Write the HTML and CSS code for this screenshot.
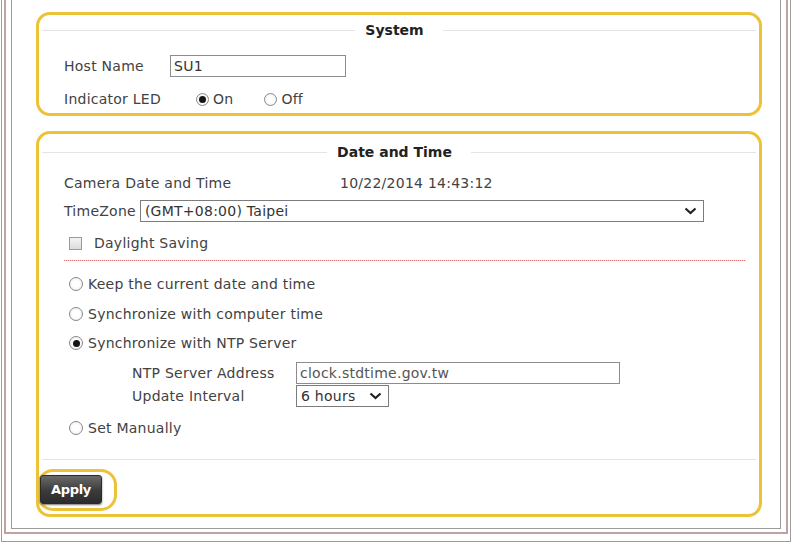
FILE: index.html
```html
<!DOCTYPE html>
<html lang="en">
	<head>
		<meta charset="utf-8">
		<title>System / Date and Time</title>
		<link rel="stylesheet" href="styles.css">
	</head>
	<body>
		<div class="frame">
			<div class="frame-mid">
				<div class="panel">
					<!-- 系统 -->
					<section class="box box-system">
						<div class="legend"><span>System</span></div>
						<div class="row row-host">
							<span class="lbl lbl-host">Host Name</span>
							<span class="field field-host">SU1</span>
						</div>
						<div class="row row-led">
							<span class="lbl lbl-led">Indicator LED</span>
							<span class="radio checked"></span><span class="opt opt-on">On</span>
							<span class="radio"></span><span class="opt">Off</span>
						</div>
					</section>
					<!-- 日期时间 -->
					<section class="box box-time">
						<div class="legend"><span>Date and Time</span></div>
						<div class="row row-cam">
							<span class="lbl lbl-cam">Camera Date and Time</span>
							<span>10/22/2014 14:43:12</span>
						</div>
						<div class="row row-tz">
							<span class="lbl lbl-tz">TimeZone</span>
							<span class="select select-tz">
								<span>(GMT+08:00) Taipei</span>
								<svg class="chev" width="13" height="8" viewBox="0 0 13 8"><path d="M1.5 1.5 L6.5 6 L11.5 1.5" fill="none" stroke="#222" stroke-width="2.2"/></svg>
							</span>
						</div>
						<div class="row row-dst">
							<span class="check"></span><span class="opt-dst">Daylight Saving</span>
						</div>
						<div class="dots"></div>
						<div class="row row-radio first">
							<span class="radio"></span><span class="opt-r">Keep the current date and time</span>
						</div>
						<div class="row row-radio">
							<span class="radio"></span><span class="opt-r">Synchronize with computer time</span>
						</div>
						<div class="row row-radio third">
							<span class="radio checked"></span><span class="opt-r">Synchronize with NTP Server</span>
						</div>
						<div class="ntp">
							<div class="ntp-row">
								<span class="lbl lbl-ntp">NTP Server Address</span>
								<span class="field field-ntp">clock.stdtime.gov.tw</span>
							</div>
							<div class="ntp-row ntp-int">
								<span class="lbl lbl-ntp">Update Interval</span>
								<span class="select select-int">
									<span>6 hours</span>
									<svg class="chev" width="13" height="8" viewBox="0 0 13 8"><path d="M1.5 1.5 L6.5 6 L11.5 1.5" fill="none" stroke="#222" stroke-width="2.2"/></svg>
								</span>
							</div>
						</div>
						<div class="row row-radio last">
							<span class="radio"></span><span class="opt-r">Set Manually</span>
						</div>
						<div class="hr"></div>
						<div class="apply-mark">
							<button class="apply">Apply</button>
						</div>
					</section>
				</div>
			</div>
		</div>
	</body>
</html>
```

FILE: styles.css
```css
*{
	margin: 0;
	padding: 0;
	box-sizing: border-box;
}
body{
	background: #fff;
	font-family: "DejaVu Sans", Verdana, sans-serif;
	font-size: 14px;
	letter-spacing: 0.25px;
	color: #424242;
}
/* 外框 */
.frame{
	margin: 0 4px 0 1px;
	height: 542px;
	border: 1px solid #9c9c9c;
	border-top: none;
	padding: 0 2px 7px 2px;
}
.frame-mid{
	height: 100%;
	border: 2px solid #bfa3a3;
	border-top: none;
	padding: 0 5px 3px 5px;
}
.panel{
	height: 100%;
	border: 1px solid #9a9a9a;
	border-top: none;
	padding: 12px 18px 0 24px;
}
/* 黄色标注框 */
.box{
	border: 3px solid #ecc236;
	border-radius: 14px;
	padding: 0 3px;
}
.box-system{
	height: 104px;
}
.box-time{
	height: 386px;
	margin-top: 15px;
}
.legend{
	display: flex;
	align-items: center;
	height: 18px;
	font-weight: bold;
	color: #222;
	letter-spacing: 0;
}
.legend::before,
.legend::after{
	content: "";
	flex: 1;
	border-top: 1px solid #e4e4e4;
}
.legend span{
	padding: 0 10px;
	margin-right: 9px;
}
.box-system .legend{
	margin-top: 6px;
}
.box-time .legend{
	margin-top: 9px;
}
.row{
	display: flex;
	align-items: center;
	height: 20px;
	padding-left: 22px;
	white-space: nowrap;
}
.lbl{
	flex: none;
}
.row-host{
	height: 22px;
	margin-top: 16px;
}
.lbl-host{
	width: 106px;
}
.field{
	height: 22px;
	border: 1px solid #8c8c8c;
	display: flex;
	align-items: center;
	padding-left: 3px;
	color: #333;
}
.field-host{
	width: 176px;
}
.row-led{
	margin-top: 12px;
}
.lbl-led{
	width: 132px;
}
/* 单选 */
.radio{
	flex: none;
	width: 13px;
	height: 13px;
	border: 1px solid #8a8a8a;
	border-radius: 50%;
	background: radial-gradient(circle, #fff 40%, #e6e6e6);
	display: flex;
	align-items: center;
	justify-content: center;
}
.radio.checked::after{
	content: "";
	width: 7px;
	height: 7px;
	border-radius: 50%;
	background: #151515;
}
.opt{
	margin-left: 4px;
}
.opt-on{
	margin-right: 31px;
}
.row-cam{
	margin-top: 12px;
}
.lbl-cam{
	width: 276px;
}
.row-tz{
	height: 21px;
	margin-top: 7px;
}
.lbl-tz{
	margin-right: 4px;
}
.select{
	height: 22px;
	border: 1px solid #7c7c7c;
	display: flex;
	align-items: center;
	justify-content: space-between;
	padding: 0 6px 0 4px;
	color: #333;
}
.select-tz{
	flex: 1;
	margin-right: 52px;
}
.chev{
	flex: none;
}
.row-dst{
	margin-top: 12px;
	padding-left: 27px;
}
.check{
	flex: none;
	width: 13px;
	height: 13px;
	border: 1px solid #9a9a9a;
	background: linear-gradient(#f4f4f4, #dcdcdc);
}
.opt-dst{
	margin-left: 12px;
}
/* 红色点线 */
.dots{
	height: 1px;
	margin: 7px 10px 0 22px;
	background: repeating-linear-gradient(90deg, #d87474 0 1px, #f2d2d2 1px 2px);
}
.row-radio{
	padding-left: 27px;
	margin-top: 10px;
}
.row-radio.first{
	margin-top: 13px;
}
.row-radio.third{
	margin-top: 9px;
}
.row-radio.last{
	margin-top: 11px;
}
.row-radio .radio{
	width: 14px;
	height: 14px;
}
.opt-r{
	margin-left: 5px;
}
.ntp{
	margin-top: 9px;
	padding-left: 90px;
}
.ntp-row{
	display: flex;
	align-items: center;
	height: 22px;
}
.ntp-int{
	margin-top: 1px;
}
.lbl-ntp{
	width: 164px;
}
.field-ntp{
	width: 324px;
	color: #555;
}
.select-int{
	width: 93px;
}
.hr{
	margin-top: 21px;
	border-top: 1px solid #e4e4e4;
}
/* Apply 标注 */
.apply-mark{
	width: 80px;
	height: 42px;
	margin: 9px 0 0 -5px;
	border: 3px solid #ecc236;
	border-radius: 16px;
	padding: 3px 0 0 0;
}
.apply{
	display: block;
	width: 62px;
	height: 29px;
	border: 1px solid #2a2a2a;
	border-radius: 3px;
	background: linear-gradient(#6a6a6a, #3b3b3b 55%, #2c2c2c);
	box-shadow: 0 1px 2px #777;
	color: #fff;
	font-family: "DejaVu Sans", Verdana, sans-serif;
	font-size: 13px;
	font-weight: bold;
	letter-spacing: -0.3px;
}
```
